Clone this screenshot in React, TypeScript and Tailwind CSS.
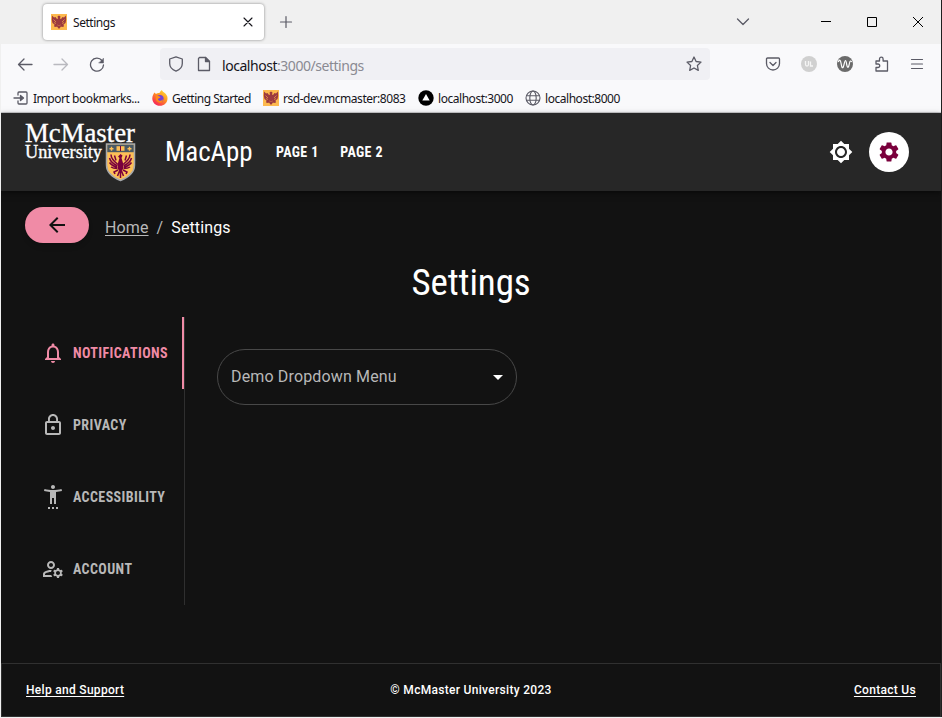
import React from "react";
import {
  MdArrowBack,
  MdArrowDropDown,
  MdBrightness7,
  MdLockOutline,
  MdNotificationsNone,
  MdOutlineManageAccounts,
  MdSettings,
  MdSettingsAccessibility,
} from "react-icons/md";

const condensed = "font-['Roboto_Condensed',Roboto,sans-serif]";

function EagleIcon({ className = "" }: { className?: string }) {
  return (
    <svg viewBox="0 0 16 16" className={`size-4 shrink-0 ${className}`}>
      <rect width="16" height="16" fill="#fdb94e" />
      <path
        d="M1 1.500 3 3.500 4.500 3 6 5l1-.5L6.500 2.500 8 1.500l1.500 1L9 4.500l1 .5 1.500-2 1.500.5 2-2 .2 4.500-.7 3-2 1.500.5 2-2 .5L10 12.500 8 15l-2-2.500-1 .5-2-.5.5-2-2-1.500-.7-3z"
        fill="#9c3a3f"
      />
      <path d="M2.500 5.500 5 8M13.500 5.500 11 8M3 8.500l2 1M13 8.500l-2 1M6.500 11l1 .5M9.500 11l-1 .5" stroke="#fdb94e" strokeWidth=".6" />
    </svg>
  );
}

function Stroke({ children, className = "", w = 1.3 }: { children: React.ReactNode; className?: string; w?: number }) {
  return (
    <svg
      viewBox="0 0 16 16"
      className={`size-4 shrink-0 text-[#5b5b66] ${className}`}
      fill="none"
      stroke="currentColor"
      strokeWidth={w}
      strokeLinecap="round"
      strokeLinejoin="round"
    >
      {children}
    </svg>
  );
}

function TabStrip() {
  return (
    <div className="flex h-11 items-start bg-[#f0f0f0] pl-[42px]">
      <div className="mt-1 flex h-9 w-[221px] items-center rounded bg-white pr-2 pl-2 shadow-[0_0_3px_rgba(0,0,0,0.45)]">
        <EagleIcon />
        <span className="mt-0.5 ml-1.5 flex-1 text-xs tracking-[-0.45px] text-[#15141a]">Settings</span>
        <Stroke className="text-[#15141a]" w={1.1}>
          <path d="M4 4l8 8M12 4l-8 8" />
        </Stroke>
      </div>
      <Stroke className="mt-[14px] ml-[14px]" w={1.2}>
        <path d="M8 2.500v11M2.500 8h11" />
      </Stroke>
      <Stroke className="mt-[14px] ml-auto" w={1.3}>
        <path d="M2.500 5 8 10.500 13.500 5" />
      </Stroke>
      <div className="mt-[14px] mr-[15px] ml-[67px] flex gap-[30px] text-black">
        <svg viewBox="0 0 16 16" className="size-4"><path d="M3 7.500h10" stroke="currentColor" /></svg>
        <svg viewBox="0 0 16 16" className="size-4"><path d="M3.500 3.500h9v9h-9z" fill="none" stroke="currentColor" /></svg>
        <svg viewBox="0 0 16 16" className="size-4"><path d="M3 3l10 10M13 3 3 13" stroke="currentColor" /></svg>
      </div>
    </div>
  );
}

function Toolbar() {
  return (
    <div className="flex h-10 items-center bg-[#f9f9fb] pl-4">
      <Stroke><path d="M15 8.500H1.500M7 3 1.500 8.500 7 14" /></Stroke>
      <Stroke className="ml-5 opacity-40"><path d="M1 8.500h13.500M9 3l5.500 5.500L9 14" /></Stroke>
      <Stroke className="ml-5">
        <path d="M14.500 9A6.500 6.500 0 1 1 13 4.500" />
        <path d="M14.500 2.500V7H10z" fill="currentColor" strokeWidth=".5" />
      </Stroke>
      <div className="ml-[55px] flex h-8 w-[550px] items-center rounded bg-[#f0f0f4] px-2">
        <Stroke><path d="M8 .8 14.300 3v4.500c0 3.200-2.500 6.200-6.300 7.700-3.800-1.500-6.300-4.500-6.300-7.700V3z" /></Stroke>
        <Stroke className="ml-3">
          <path d="M3.500 1.500h6l4 4v9h-11v-12z" />
          <path d="M9.500 1.500v4h4z" fill="currentColor" />
        </Stroke>
        <span className="mt-0.5 ml-[10px] flex-1 text-[14px] tracking-[-0.46px] text-[#15141a]">
          localhost<span className="text-[#8a8a92]">:3000/settings</span>
        </span>
        <Stroke><path d="m8 1 2.100 4.500 4.900.6-3.600 3.400.9 4.900L8 12l-4.300 2.400.9-4.900L1 6.100l4.900-.6z" /></Stroke>
      </div>
      <div className="ml-[55px] flex items-center gap-5">
        <Stroke>
          <path d="M2.500 2h11a1 1 0 0 1 1 1v4.500a6.500 6.500 0 0 1-13 0V3a1 1 0 0 1 1-1z" />
          <path d="m5 6.500 3 3 3-3" />
        </Stroke>
        <svg viewBox="0 0 16 16" className="size-4" fill="none">
          <circle cx="8" cy="8" r="8" fill="#d0d0d0" />
          <path d="M4.500 5v3.500a1.500 1.500 0 0 0 3 0V5M9.500 5.500V10H12" stroke="#f5f5f5" strokeWidth="1.300" />
        </svg>
        <svg viewBox="0 0 16 16" className="size-4" fill="none">
          <circle cx="8" cy="8" r="8" fill="#6b6b6b" />
          <path d="M1.200 6C2.500 3 3.500 4 4 7s1 5.500 2 4.500S7.500 4.500 8.500 4.500s1 5.500 2 6.500 1.500-1.500 2-4 1.200-2.500 2.300-1" stroke="#fff" strokeWidth="1.200" />
        </svg>
        <Stroke className="translate-x-px">
          <path d="M2 5h3.500V3a1.800 1.800 0 0 1 3.600 0v2H13.500v10H2v-3.500h2a1.600 1.600 0 0 0 0-3.500H2z" />
        </Stroke>
        <Stroke w={1.2}><path d="M2.500 3.500h11M2.500 8h11M2.500 12.500h11" /></Stroke>
      </div>
    </div>
  );
}

function Bookmarks() {
  return (
    <div className="flex h-[29px] items-center border-b border-[#cfcfd2] bg-[#f9f9fb] pl-3 text-xs whitespace-nowrap text-[#15141a]">
      <div className="flex w-[139px] items-center gap-1">
        <Stroke>
          <path d="M5 5V3a1 1 0 0 1 1-1h7a1 1 0 0 1 1 1v10a1 1 0 0 1-1 1H6a1 1 0 0 1-1-1v-2M1 8h8" />
          <path d="M7.500 5.500 10.500 8l-3 2.500z" fill="currentColor" />
        </Stroke>
        <span className="mt-px tracking-[-0.46px]">Import bookmarks...</span>
      </div>
      <div className="flex w-[111px] items-center gap-1">
        <svg viewBox="0 0 16 16" className="size-4">
          <defs>
            <linearGradient id="fox" x1="0.9" y1="0" x2="0.2" y2="1">
              <stop offset="0" stopColor="#ffe43a" />
              <stop offset=".45" stopColor="#ff9320" />
              <stop offset="1" stopColor="#f5195f" />
            </linearGradient>
          </defs>
          <path d="M2.500 2.500 4 4c1-.8 2-1 3.500-1C8 1.500 9 .7 10 0c0 2 4 2.500 5.300 6.500C16.500 12 12.500 15.800 8 15.800S.3 12.500.3 8.500c0-2.500 1-4.500 2.200-6z" fill="url(#fox)" />
          <circle cx="8" cy="8.500" r="3.600" fill="#7542d5" />
          <path d="M4 6c2-.8 3.500 0 4.500 1.500-1 1-2.500.5-2.500 2 1 2 4 1.500 5-.5-.2 3-2 4-4 3.500S3 10 4 6z" fill="#ff8a16" />
        </svg>
        <span className="mt-px tracking-[-0.5px]">Getting Started</span>
      </div>
      <div className="flex w-[155px] items-center gap-1">
        <EagleIcon />
        <span className="mt-px tracking-[-0.46px]">rsd-dev.mcmaster:8083</span>
      </div>
      <div className="flex w-[107px] items-center gap-1">
        <svg viewBox="0 0 16 16" className="size-4">
          <circle cx="8" cy="8" r="7.700" fill="#000" />
          <path d="m8 4 3.700 6.500H4.300z" fill="#fff" />
        </svg>
        <span className="mt-px tracking-[-0.46px]">localhost:3000</span>
      </div>
      <div className="flex items-center gap-1">
        <Stroke w={1.1}>
          <circle cx="8" cy="8" r="7" />
          <ellipse cx="8" cy="8" rx="3.200" ry="7" />
          <path d="M1.500 5.800h13M1.500 10.200h13" />
        </Stroke>
        <span className="mt-px tracking-[-0.46px]">localhost:8000</span>
      </div>
    </div>
  );
}

function McMasterLogo() {
  return (
    <svg viewBox="0 0 112 62" className="h-[62px] w-28 shrink-0 overflow-visible">
      <g fill="#fff" stroke="#fff" strokeWidth=".35" className="font-['Liberation_Serif',serif]">
        <text x="0" y="21" fontSize="28" textLength="110" lengthAdjust="spacingAndGlyphs">McMaster</text>
        <text x="0" y="36.700" fontSize="18" textLength="77" lengthAdjust="spacingAndGlyphs">University</text>
      </g>
      <path d="M81.500 23h28v21c0 7-5 12-14 15.500-9-3.500-14-8.500-14-15.500z" fill="#fdbf57" stroke="#a6a9ac" strokeWidth="1.500" />
      <path d="M82.300 23.800h26.400v7.400H82.300z" fill="#495965" />
      <path d="M91.500 25.200h8v4.600h-8z" fill="#fdbf57" />
      <path d="M95.500 25v5" stroke="#7a003c" />
      <path d="M86.500 25.700v4M84.500 27.700h4M104.500 25.700v4M102.500 27.700h4" stroke="#fdbf57" strokeWidth="1.400" />
      <g stroke="#7a003c" strokeWidth="1.500" fill="none">
        <path d="M86 33.500c0 4 3 7 7 10M84.500 37c1 4 4 6 8 8M84.500 41.500c2 3 5 4 8 5M86 46c2 1.500 4 1.500 6.500 1.500M105 33.500c0 4-3 7-7 10M106.500 37c-1 4-4 6-8 8M106.500 41.500c-2 3-5 4-8 5M105 46c-2 1.500-4 1.500-6.500 1.500" />
        <path d="M89.500 34.500l1.500 5M101.500 34.500l-1.500 5M93 49l-4 2 1 2M98 49l4 2-1 2M94.500 50l-2 5M96.500 50l2 5M95.500 48v9" />
      </g>
      <path d="M93 35.500l2.500-2.500 2 1.500-1 2.500 1.500 5v6l-2.500 4-2.500-4v-6l1.500-5z" fill="#7a003c" />
    </svg>
  );
}

function Header() {
  return (
    <header className="z-10 flex h-[78px] items-center bg-[#272727] pr-8 pl-6 text-white shadow-[0_2px_6px_rgba(0,0,0,0.5)]">
      <McMasterLogo />
      <span className={`ml-7 w-[87px] text-[27px] leading-none tracking-[-0.1px] ${condensed}`}>MacApp</span>
      <nav className={`ml-6 flex gap-[21.5px] text-sm font-bold tracking-[0.4px] ${condensed}`}>
        <a>PAGE 1</a>
        <a>PAGE 2</a>
      </nav>
      <MdBrightness7 className="mr-4 ml-auto size-6" />
      <div className="flex size-10 items-center justify-center rounded-full bg-white">
        <MdSettings className="size-6 text-[#7a003c]" />
      </div>
    </header>
  );
}

const tabs = [
  { label: "NOTIFICATIONS", Icon: MdNotificationsNone },
  { label: "PRIVACY", Icon: MdLockOutline },
  { label: "ACCESSIBILITY", Icon: MdSettingsAccessibility },
  { label: "ACCOUNT", Icon: MdOutlineManageAccounts },
];

export default function App() {
  return (
    <div className="flex h-[718px] w-[942px] overflow-hidden border-b border-l border-[#f0f0f0] font-['Noto_Sans',sans-serif]">
      <div className="flex w-[940px] flex-col bg-[#121212]">
        <TabStrip />
        <Toolbar />
        <Bookmarks />
        <Header />
        <main className="flex flex-1 flex-col font-[Roboto,sans-serif]">
          <div className="mt-4 ml-6 flex h-9 items-center">
            <button className="flex h-9 w-16 items-center justify-center rounded-full bg-[#f08ba6] text-[#121212] shadow-md">
              <MdArrowBack className="size-6" />
            </button>
            <div className="mt-[5px] ml-4 flex gap-2 text-base tracking-[0.12px] text-[#b8b8b8]">
              <a className="underline underline-offset-2">Home</a>
              <span>/</span>
              <span className="text-white">Settings</span>
            </div>
          </div>
          <h1 className={`mt-[17px] text-center text-[37px] leading-[46px] tracking-[-0.1px] text-white ${condensed}`}>Settings</h1>
          <div className="mt-[11px] flex">
            <div className="h-72 w-[184px] border-r border-[#2f2f2f]">
              {tabs.map(({ label, Icon }, i) => (
                <div
                  key={label}
                  className={`flex h-[72px] items-center gap-2 pl-10 text-sm font-bold tracking-[0.4px] ${condensed} ${
                    i === 0 ? "border-r-2 border-[#f08ba6] text-[#f08ba6]" : "text-[#b8b8b8]"
                  }`}
                >
                  <Icon className="size-6 shrink-0" />
                  <span>{label}</span>
                </div>
              ))}
            </div>
            <div className="mt-8 ml-8 flex h-14 w-[300px] items-center justify-between rounded-full border border-[#484848] pr-1.5 pl-[13px]">
              <span className="text-base tracking-[0.15px] text-[#b8b8b8]">Demo Dropdown Menu</span>
              <MdArrowDropDown className="size-6 text-white" />
            </div>
          </div>
        </main>
        <footer className="grid h-[54px] grid-cols-3 items-center border border-[#303030] px-6 font-[Roboto,sans-serif] text-xs font-medium tracking-[0.3px] text-white">
          <a className="underline underline-offset-2">Help and Support</a>
          <span className="text-center">© McMaster University 2023</span>
          <a className="text-right underline underline-offset-2">Contact Us</a>
        </footer>
      </div>
      <div className="w-px bg-[#202020]" />
    </div>
  );
}
